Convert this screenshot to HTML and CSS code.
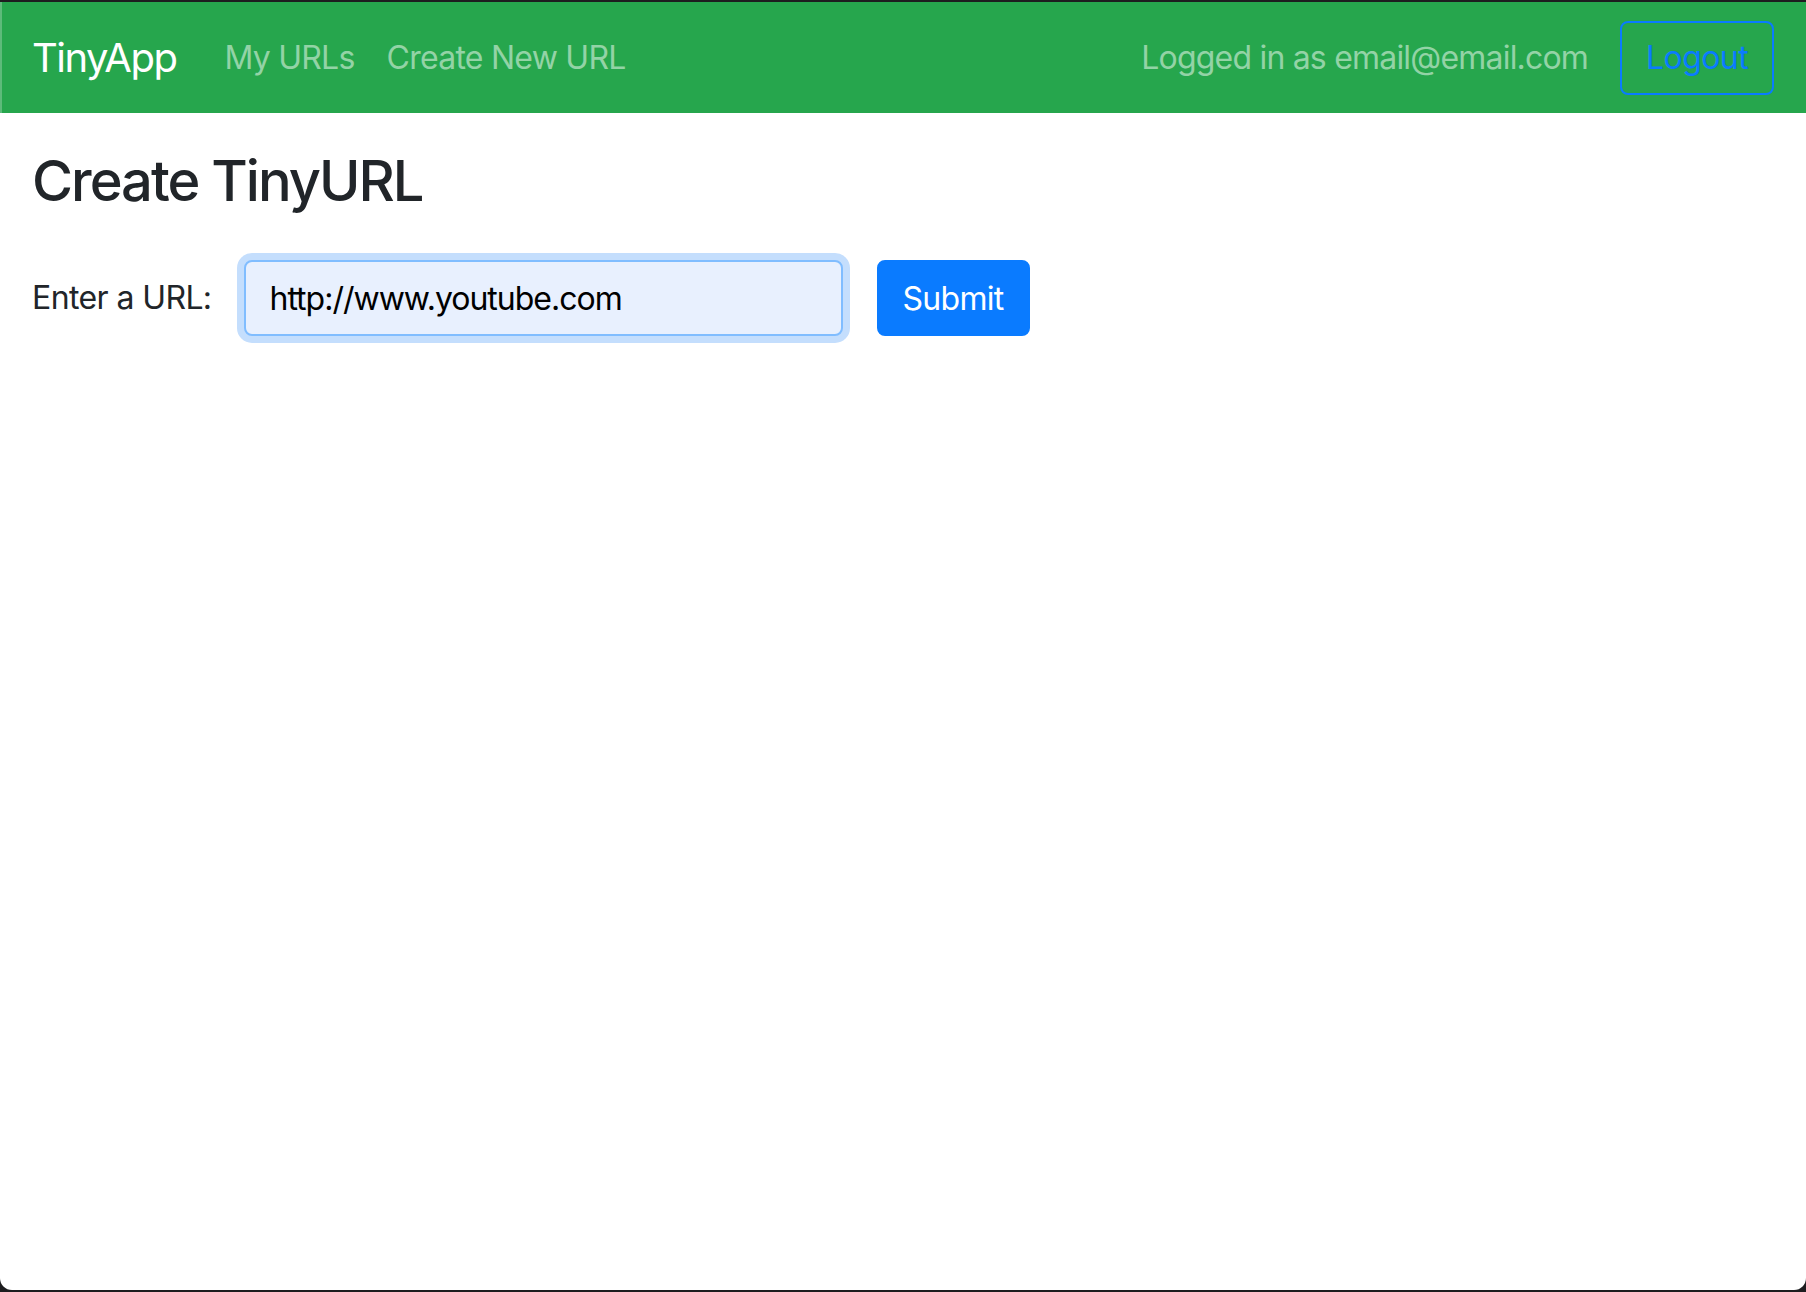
FILE: index.html
```html
<!DOCTYPE html>
<html lang="en">
<head>
<meta charset="utf-8">
<title>TinyApp</title>
<link rel="stylesheet" href="styles.css">
</head>
<body>
<div class="window">
  <nav class="navbar">
    <a class="brand" href="#">TinyApp</a>
    <ul class="nav">
      <li><a class="nav-link" href="#">My URLs</a></li>
      <li><a class="nav-link" href="#">Create New URL</a></li>
    </ul>
    <div class="nav-right">
      <span class="login-text">Logged in as email@email.com</span>
      <button class="btn-logout" type="button">Logout</button>
    </div>
  </nav>
  <main class="main">
    <h3 class="title">Create TinyURL</h3>
    <form class="url-form">
      <label class="url-label" for="longURL">Enter a URL:</label>
      <input class="url-input" id="longURL" type="text" value="http://www.youtube.com">
      <button class="btn-submit" type="button">Submit</button>
    </form>
  </main>
</div>
</body>
</html>
```
FILE: styles.css
```css
html, body {
  margin: 0;
  padding: 0;
}
body {
  background: #1d1d1f;
  font-family: Inter, "Liberation Sans", sans-serif;
  color: #212529;
}
.window {
  margin-top: 2px;
  height: 1288px;
  background: #ffffff;
  border-radius: 0 0 12px 12px;
  overflow: hidden;
  display: flex;
  flex-direction: column;
}
.navbar {
  height: 111px;
  box-sizing: border-box;
  background: #26a64d;
  border-left: 2px solid #5dbb7a;
  display: flex;
  align-items: center;
  padding: 0 32px 0 30px;
}
.brand {
  color: #ffffff;
  font-size: 40px;
  line-height: 60px;
  text-decoration: none;
  margin-right: 32px;
  letter-spacing: -1.5px;
}
.nav {
  display: flex;
  list-style: none;
  margin: 0;
  padding: 0;
}
.nav-link {
  display: block;
  padding: 0 16px;
  font-size: 32px;
  line-height: 48px;
  color: #93d3a6;
  text-decoration: none;
  letter-spacing: -0.75px;
}
.nav-right {
  margin-left: auto;
  display: flex;
  align-items: center;
}
.login-text {
  font-size: 32px;
  line-height: 48px;
  color: #93d3a6;
  margin-right: 32px;
  letter-spacing: -0.8px;
}
.btn-logout {
  font-family: inherit;
  font-size: 32px;
  line-height: 48px;
  padding: 11px 24px;
  background: transparent;
  color: #0a7bff;
  border: 2px solid #0a7bff;
  border-radius: 8px;
  letter-spacing: -0.6px;
}
.main {
  padding: 0 32px;
}
.title {
  font-size: 56px;
  font-weight: 500;
  line-height: 67px;
  margin: 35px 0 45px;
  letter-spacing: -2px;
}
.url-form {
  display: flex;
  align-items: center;
}
.url-label {
  font-size: 32px;
  line-height: 48px;
  margin-right: 32px;
  letter-spacing: -0.6px;
}
.url-input {
  box-sizing: border-box;
  width: 599px;
  height: 76px;
  padding: 0 24px;
  font-family: inherit;
  font-size: 32px;
  color: #000000;
  background: #e8f0fe;
  border: 2px solid #80bdff;
  border-radius: 8px;
  box-shadow: 0 0 0 7px #c4defd;
  outline: none;
  letter-spacing: -1px;
}
.btn-submit {
  box-sizing: border-box;
  margin-left: 34px;
  height: 76px;
  width: 153px;
  font-family: inherit;
  font-size: 32px;
  color: #ffffff;
  background: #0a7bff;
  border: 2px solid #0a7bff;
  border-radius: 8px;
  letter-spacing: -0.7px;
}
```
